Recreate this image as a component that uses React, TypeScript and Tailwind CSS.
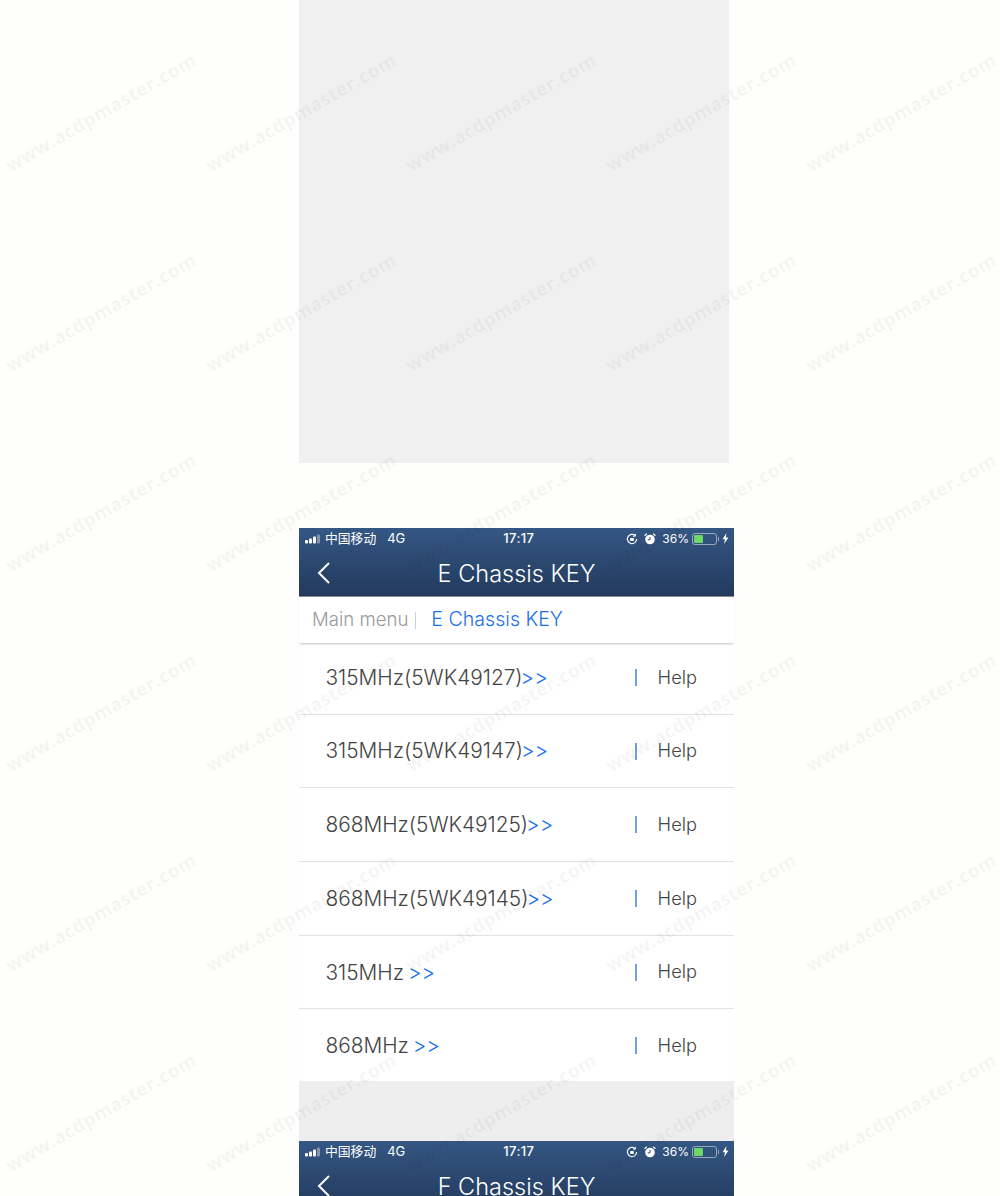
const FONT = "font-['Inter','Noto_Sans_CJK_SC',sans-serif]";

const ROWS = [
  { label: "315MHz(5WK49127)", arrows: ">>" },
  { label: "315MHz(5WK49147)", arrows: ">>" },
  { label: "868MHz(5WK49125)", arrows: ">>" },
  { label: "868MHz(5WK49145)", arrows: ">>" },
  { label: "315MHz ", arrows: ">>" },
  { label: "868MHz ", arrows: ">>" },
];

function StatusBar() {
  return (
    <div className="flex h-[21px] items-center pl-[6px] pr-[5px] text-[12px] leading-none text-white">
      <svg width="17" height="10" viewBox="0 0 17 10" fill="currentColor">
        <rect x="0" y="6" width="3" height="3.5" rx="1" />
        <rect x="4" y="4.5" width="3" height="5" rx="1" />
        <rect x="8" y="2.5" width="3" height="7" rx="1" />
        <rect x="12" y="0.5" width="3" height="9" rx="1" fill="#8394ad" />
      </svg>
      <span className="ml-[3px] font-['Noto_Sans_CJK_SC',sans-serif] text-[12.8px]">中国移动</span>
      <span className="ml-[11px] text-[13px]">4G</span>
      <span className="ml-[98px] text-[13px] font-medium tracking-[0.4px]">17:17</span>
      <div className="ml-auto flex items-center">
        <svg width="12" height="12" viewBox="0 0 12 12" fill="none" stroke="currentColor" className="mr-[6px]">
          <path d="M10.6 6a4.6 4.6 0 1 1-1.5-3.4" strokeWidth="1.2" />
          <path d="M9.4 0.8v2.4H7" strokeWidth="1" />
          <rect x="4.2" y="5" width="3.6" height="3" fill="currentColor" stroke="none" />
        </svg>
        <svg width="12" height="12" viewBox="0 0 12 12" fill="currentColor" className="mr-[6px]">
          <circle cx="6" cy="6.5" r="4.8" />
          <path d="M6 4v2.8H3.8" fill="none" stroke="#2f4d78" strokeWidth="1" />
          <path d="M0.6 2.8 2.8 0.8M11.4 2.8 9.2 0.8" stroke="currentColor" strokeWidth="1.3" />
        </svg>
        <span className="text-[12px]">36%</span>
        <div className="ml-[3px] flex h-[12px] w-[25px] items-center rounded-[3px] border border-[#9aa8bc] p-[1px]">
          <div className="h-full w-[9px] rounded-[1px] bg-[#6fd66a]" />
        </div>
        <div className="ml-[1px] h-[4px] w-[1px] bg-[#9aa8bc]" />
        <svg width="7" height="11" viewBox="0 0 7 11" fill="currentColor" className="ml-[3px]">
          <path d="M4.4 0 0.6 6.2h2.3L2.2 11 6.4 4.4H3.9z" />
        </svg>
      </div>
    </div>
  );
}

function NavBar({ title }: { title: string }) {
  return (
    <div className="relative h-[68px] bg-gradient-to-b from-[#345784] to-[#233a5d]">
      <StatusBar />
      <div className="relative flex h-[49px] items-center justify-center text-[23.5px] font-light text-white">
        <svg
          width="14"
          height="22"
          viewBox="0 0 14 22"
          fill="none"
          stroke="currentColor"
          strokeWidth="2"
          className="absolute left-[18px] top-[13px]"
        >
          <path d="M12 1 2 11l10 10" />
        </svg>
        <span>{title}</span>
      </div>
    </div>
  );
}

function Watermark() {
  return (
    <div className="pointer-events-none absolute inset-0 grid grid-cols-[repeat(5,200px)] auto-rows-[200px] overflow-hidden pl-[1px] pt-[12px]">
      {Array.from({ length: 30 }).map((_, i) => (
        <div key={i} className="flex items-center justify-center">
          <span className="-rotate-[30deg] whitespace-nowrap font-['Open_Sans',sans-serif] text-[18.5px] font-semibold tracking-[0.9px] text-black/[0.05] blur-[0.4px]">
            www.acdpmaster.com
          </span>
        </div>
      ))}
    </div>
  );
}

export default function App() {
  return (
    <div className={`relative h-[1196px] w-[1000px] overflow-hidden bg-[#fefefc] ${FONT}`}>
      <div className="ml-[299px] w-[435px]">
        <div className="h-[463px] w-[430px] bg-[#f0f0f0]" />
        <div className="mt-[65px] flex flex-col">
          <NavBar title="E Chassis KEY" />
          <div className="relative z-10 flex h-[47px] items-center border-t border-[#8a8a8a] bg-white pl-[13px] text-[18.6px] font-light shadow-[0_2px_2px_-1px_rgba(0,0,0,0.25)]">
            <span className="text-[#999999]">Main menu</span>
            <span className="ml-[7px] h-[17px] w-[1px] bg-[#b5d3f5]" />
            <span className="ml-[15px] text-[19.6px] text-[#1a6ff0]">E Chassis KEY</span>
          </div>
          <div className="-mt-[2px] bg-white">
            {ROWS.map((row, i) => (
              <div
                key={i}
                className={`flex items-center pl-[26.5px] text-[20.8px] font-light text-[#444444] ${i < 5 ? "h-[73.7px] border-b border-[#e2e2e2]" : "h-[71.7px]"}`}
              >
                <span className="whitespace-pre">{row.label}</span>
                <span className="-ml-[2px] text-[#1a6ff0]">{row.arrows}</span>
                <span className="ml-auto h-[17px] w-[2px] bg-[#6f9fe8]" />
                <span className="ml-[21px] mr-[37px] text-[18.3px]">Help</span>
              </div>
            ))}
          </div>
          <div className="h-[60px] bg-[#eeeeee]" />
          <NavBar title="F Chassis KEY" />
        </div>
      </div>
      <Watermark />
    </div>
  );
}
